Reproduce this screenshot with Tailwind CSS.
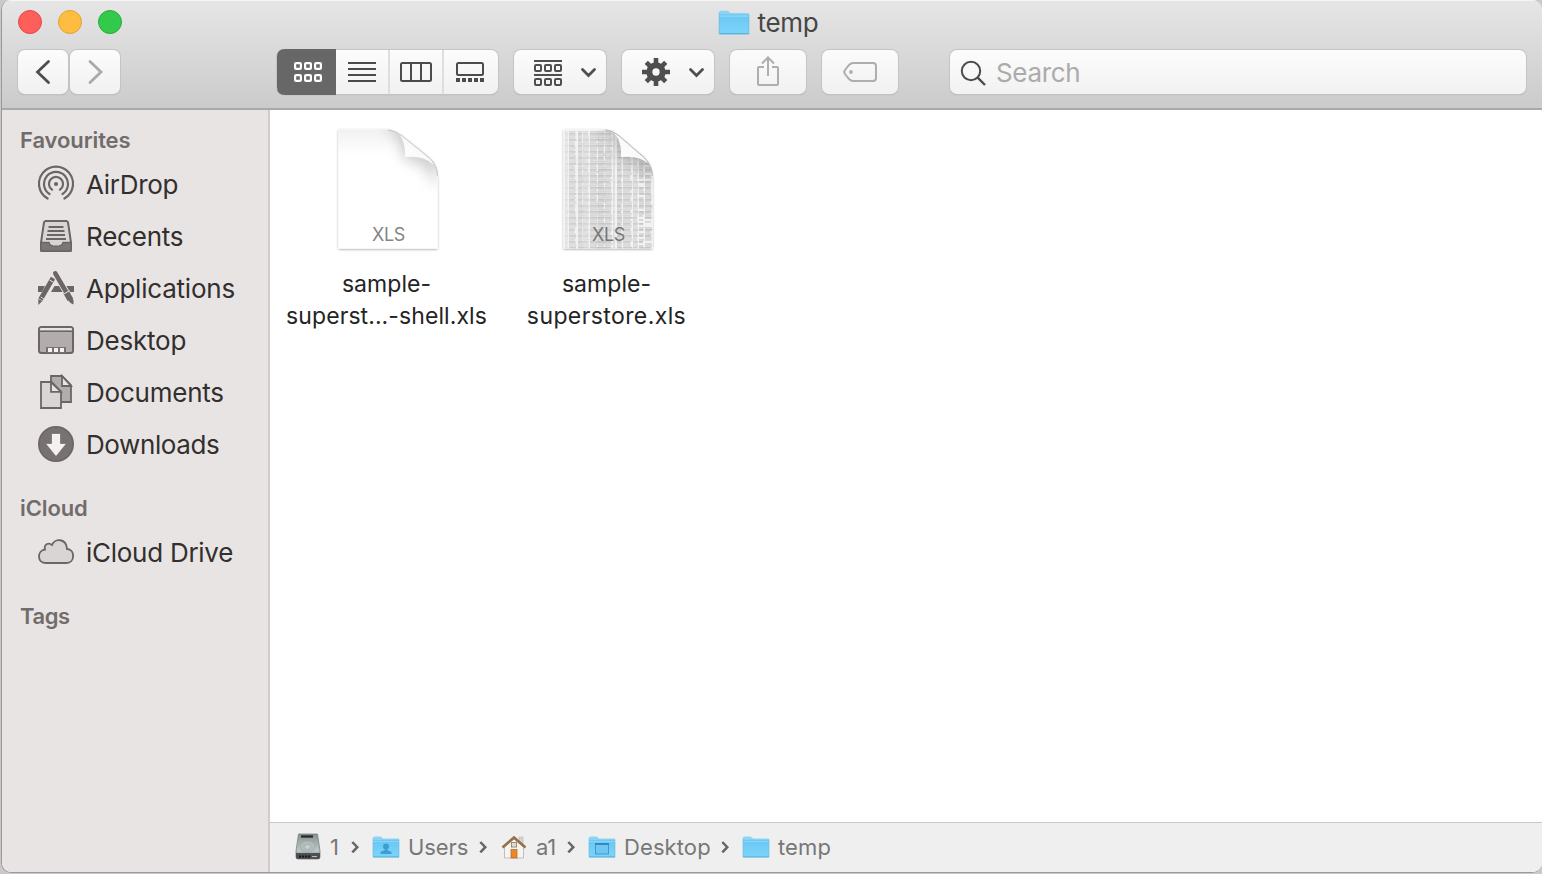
<!DOCTYPE html>
<html lang="en">
<head>
<meta charset="utf-8">
<title>temp</title>
<script src="https://cdn.jsdelivr.net/npm/@tailwindcss/browser@4"></script>
</head>
<body class="h-[874px] w-[1542px] overflow-hidden bg-[#c9c9c9] font-[Inter,'Liberation_Sans',sans-serif] antialiased">
<svg class="absolute h-0 w-0" aria-hidden="true">
  <defs>
    <linearGradient id="fold" x2="0" y2="1"><stop stop-color="#6ac8f4"/><stop offset="1" stop-color="#7dd4fa"/></linearGradient>
    <linearGradient id="disk" x2="0" y2="1"><stop stop-color="#87918f"/><stop offset=".65" stop-color="#bcc6c6"/><stop offset="1" stop-color="#858b8c"/></linearGradient>
    <linearGradient id="page" x2="0" y2="1"><stop stop-color="#f1f1f1"/><stop offset=".22" stop-color="#fff"/></linearGradient>
    <linearGradient id="curl" x1="0" y1="1" x2="1" y2="0"><stop stop-color="#fff"/><stop offset=".5" stop-color="#fafafa"/><stop offset="1" stop-color="#dcdcdc"/></linearGradient>
    <filter id="soft" x="-50%" y="-50%" width="200%" height="200%"><feGaussianBlur stdDeviation="7"/></filter>
    <filter id="drop" x="-10%" y="-10%" width="120%" height="120%"><feDropShadow dx="0" dy=".8" stdDeviation=".9" flood-opacity=".42"/></filter>
    <symbol id="folder" viewBox="0 0 28 24">
      <path d="M1 3.2Q1 1.5 2.5 1.5H8.5L11 3.5H26Q27 3.5 27 4.5V22H1Z" fill="#89d5f7"/>
      <path d="M1 6H27V22Q27 22.6 26 22.6H2Q1 22.6 1 22Z" fill="url(#fold)"/>
      <path d="M1 5.400H27" stroke="#57b3e0" stroke-width=".6"/><path d="M1 6.300H27" stroke="#a5e1fa" stroke-width=".7"/>
      <path d="M1 21.9H27" stroke="#5aaed5" stroke-width="1"/>
      <path d="M1 3.2V22M27 4.5V22" stroke="#68b9dd" stroke-width=".6"/>
    </symbol>
    <symbol id="chev" viewBox="0 0 8 12"><path d="M1.3 1L6.3 6.200L1.3 11.400" fill="none" stroke="#666" stroke-width="2.5"/></symbol>
  </defs>
</svg>

<div class="ml-[1px] flex h-[873px] w-[1541px] flex-col overflow-hidden rounded-[10px] border-b border-l border-[#979a9a] bg-white">
  <header class="flex h-[110px] shrink-0 flex-col border-b-2 border-[#a9a9a9] bg-linear-to-b from-[#e6e6e6] to-[#cbcbcb] shadow-[inset_0_1px_0_#f5f5f5]">
    <div class="grid h-[46px] grid-cols-3 items-center">
      <div class="-mt-[2px] flex gap-4 pl-4">
        <span class="h-6 w-6 rounded-full border border-[#e2474a] bg-[#fe5f5a]"></span>
        <span class="h-6 w-6 rounded-full border border-[#e2a038] bg-[#febc40]"></span>
        <span class="h-6 w-6 rounded-full border border-[#27ac38] bg-[#33ca4b]"></span>
      </div>
      <div class="flex items-center justify-center gap-[7px] pr-[7px]">
        <svg class="-mt-[2px] h-[27px] w-[32px]" viewBox="0 0 28 24" preserveAspectRatio="none"><use href="#folder" width="28" height="24"/></svg>
        <span class="text-[26px] leading-8 tracking-[-0.25px] text-[#464646]">temp</span>
      </div>
    </div>
    <div class="flex items-start pt-1 pl-[16px]">
      <button class="mr-[2px] h-[44px] w-[50px] rounded-[7px] bg-linear-to-b from-[#fcfcfc] to-[#f1f1f1] shadow-[0_0_0_1px_#c4c4c4,0_1px_1px_0_#999]"><svg class="h-[44px] w-[50px]" fill="none" stroke="#4e4e4e" stroke-width="2.8" stroke-linecap="round"><path d="M30.5 11.5L19.5 22L30.5 32.5"/></svg></button>
      <button class="h-[44px] w-[50px] rounded-[7px] bg-linear-to-b from-[#fcfcfc] to-[#f1f1f1] shadow-[0_0_0_1px_#c4c4c4,0_1px_1px_0_#999]"><svg class="h-[44px] w-[50px]" fill="none" stroke="#aaa" stroke-width="2.8" stroke-linecap="round"><path d="M20 11.5L31 22L20 32.5"/></svg></button>
      <div class="ml-[157px] flex h-[44px] w-[221px] overflow-visible rounded-[7px] bg-linear-to-b from-[#fcfcfc] to-[#f1f1f1] shadow-[0_0_0_1px_#c4c4c4,0_1px_1px_0_#999]">
        <svg class="-mt-px h-[46px] w-[221px] overflow-visible" viewBox="277 49 221 46" fill="none">
          <path d="M336 49V95H285Q277 95 277 87V57Q277 49 285 49Z" fill="#676767"/>
          <g stroke="#fff" stroke-width="2.2"><rect x="295.100" y="63.100" width="5.8" height="5.8" rx="1"/><rect x="305.100" y="63.100" width="5.8" height="5.8" rx="1"/><rect x="315.100" y="63.100" width="5.8" height="5.8" rx="1"/><rect x="295.100" y="75.100" width="5.8" height="5.8" rx="1"/><rect x="305.100" y="75.100" width="5.8" height="5.8" rx="1"/><rect x="315.100" y="75.100" width="5.8" height="5.8" rx="1"/></g>
          <path d="M389 50V94M443 50V94" stroke="#dedede" stroke-width="2"/>
          <g stroke="#4b4b4b" stroke-width="2"><path d="M348 63H376M348 69H376M348 75H376M348 81H376"/><rect x="401" y="63" width="30" height="18" rx="1.5"/><path d="M411 63V81M421 63V81"/><rect x="457" y="63" width="26" height="12" rx="1.5"/><path d="M456 80H484" stroke-width="4" stroke-dasharray="4 2"/></g>
        </svg>
      </div>
      <button class="ml-[16px] h-[44px] w-[92px] rounded-[7px] bg-linear-to-b from-[#fcfcfc] to-[#f1f1f1] shadow-[0_0_0_1px_#c4c4c4,0_1px_1px_0_#999]">
        <svg class="h-[44px] w-[92px]" viewBox="514 50 92 44" fill="none" stroke="#4f4f4f" stroke-width="2"><path d="M534 61H562M534 75H562"/><rect x="535" y="65" width="6" height="6" rx="1"/><rect x="545" y="65" width="6" height="6" rx="1"/><rect x="555" y="65" width="6" height="6" rx="1"/><rect x="535" y="79" width="6" height="6" rx="1"/><rect x="545" y="79" width="6" height="6" rx="1"/><rect x="555" y="79" width="6" height="6" rx="1"/><path d="M582.5 69.5L588.5 75.5L594.5 69.5" stroke-width="2.8" stroke-linecap="round"/></svg>
      </button>
      <button class="ml-[16px] h-[44px] w-[92px] rounded-[7px] bg-linear-to-b from-[#fcfcfc] to-[#f1f1f1] shadow-[0_0_0_1px_#c4c4c4,0_1px_1px_0_#999]">
        <svg class="h-[44px] w-[92px]" viewBox="622 50 92 44" fill="none" stroke="#4f4f4f"><circle cx="656" cy="72" r="6.7" stroke-width="6"/><g stroke-width="4.6"><path d="M656 58V64M656 80V86M642 72H648M664 72H670"/><path d="M646.3 62.3L650.3 66.3M661.7 77.7L665.7 81.7M665.7 62.3L661.7 66.3M650.3 77.7L646.3 81.7"/></g><path d="M690.5 69.5L696.5 75.5L702.5 69.5" stroke-width="2.8" stroke-linecap="round"/></svg>
      </button>
      <button class="ml-[16px] h-[44px] w-[76px] rounded-[7px] bg-linear-to-b from-[#fbfbfb] to-[#f1f1f1] shadow-[0_0_0_1px_#c4c4c4,0_1px_1px_0_#999]">
        <svg class="h-[44px] w-[76px]" viewBox="730 50 76 44" fill="none" stroke="#aeaeae" stroke-width="2"><path d="M764 67H759Q758 67 758 68V84Q758 85 759 85H777Q778 85 778 84V68Q778 67 777 67H772M768 76V58M762 63.5L768 57.5L774 63.5"/></svg>
      </button>
      <button class="ml-[16px] h-[44px] w-[76px] rounded-[7px] bg-linear-to-b from-[#fbfbfb] to-[#f1f1f1] shadow-[0_0_0_1px_#c4c4c4,0_1px_1px_0_#999]">
        <svg class="h-[44px] w-[76px]" viewBox="822 50 76 44" fill="none" stroke="#aeaeae" stroke-width="2"><path d="M853 63H873Q876 63 876 66V78Q876 81 873 81H853Q851 81 849 79L845 74Q843.5 72 845 70L849 65Q851 63 853 63Z"/><circle cx="851" cy="72" r="1.9" fill="#aeaeae" stroke="none"/></svg>
      </button>
      <div class="ml-[52px] flex h-[44px] w-[576px] items-center rounded-[7px] bg-linear-to-b from-[#fcfcfc] to-[#f2f2f2] shadow-[0_0_0_1px_#c4c4c4,0_1px_1px_0_#999]">
        <svg class="h-[44px] w-[46px]" viewBox="950 50 46 44" fill="none" stroke="#4b4b4b" stroke-width="2"><circle cx="971" cy="71" r="9.2"/><path d="M977.7 77.7L985 85" stroke-width="2.4"/></svg>
        <span class="pt-[2px] text-[26px] leading-8 tracking-[-0.35px] text-[#ababab]">Search</span>
      </div>
    </div>
  </header>

  <div class="flex min-h-0 flex-1">
    <aside class="w-[268px] shrink-0 border-r-2 border-[#cfcccb] bg-[#e8e4e3] pt-[13px] text-[26px] tracking-[-0.22px] text-[#322f2e]">
      <h2 class="mb-px pl-[18px] text-[22px] leading-[34px] font-semibold tracking-[-0.1px] text-[#716c6b]">Favourites</h2>
      <ul>
        <li class="flex h-[52px] items-center gap-3 pl-[36px]">
          <svg class="h-[38px] w-[36px]" viewBox="38 165 36 38" fill="none" stroke="#6b6665" stroke-width="2.2" stroke-linecap="round"><path d="M47.6 198.5A17 17 0 1 1 64.4 198.5M49.5 194A12 12 0 1 1 62.5 194M52 189.7A7 7 0 1 1 60 189.7"/><circle cx="56" cy="184" r="2.1" fill="#6b6665" stroke="none"/></svg>
          <span class="tracking-[-0.3px]">AirDrop</span></li>
        <li class="flex h-[52px] items-center gap-3 pl-[36px]">
          <svg class="h-[38px] w-[36px]" viewBox="38 217 36 38" fill="none" stroke="#6b6665" stroke-width="2"><path d="M45.5 221H66.5L68 222.3L71 242.5V249.5Q71 251 69.5 251H42.5Q41 251 41 249.5V242.5L44 222.3Z" fill="#d9d5d4"/><path d="M41 242.5H49C49.500 247.5 62.500 247.5 63 242.5H71V251H41Z" fill="#7b7675" stroke-width="1.4"/><path d="M48.5 227H63.5M47.5 231H64.5M47 235H65M46 239H66" stroke-width="1.8"/></svg>
          <span>Recents</span></li>
        <li class="flex h-[52px] items-center gap-3 pl-[36px]">
          <svg class="h-[38px] w-[36px]" viewBox="38 269 36 38" fill="none" stroke="#6b6665"><path d="M38 286H45L42 292H38ZM51 292L54.5 286H59L62.5 292ZM66.5 286H74V292H70Z" fill="#6b6665" stroke="none"/><path d="M55.3 273.3L68.5 296" stroke-width="4.6" stroke-linecap="round"/><path d="M66 292L70.2 299.5" stroke-width="6"/><path d="M68 298.5Q68 302 73.3 304.5Q74.2 301 72.3 297" fill="#6b6665" stroke="none"/><path d="M53 278L40.5 299.5" stroke-width="4.8"/><path d="M38.3 299L42.3 301L38.3 305Z" fill="#6b6665" stroke="none"/><path d="M49.5 280L53.3 282.2M63.8 294L69.7 290.7" stroke="#e8e4e3" stroke-width="1"/><path d="M40.7 297L44 299" stroke="#e8e4e3" stroke-width=".8"/></svg>
          <span>Applications</span></li>
        <li class="flex h-[52px] items-center gap-3 pl-[36px]">
          <svg class="h-[38px] w-[36px]" viewBox="38 321 36 38" fill="none" stroke="#6b6665" stroke-width="2"><rect x="39" y="327" width="34" height="26" rx="2.5" fill="#b2adac"/><path d="M40 330.5V329Q40 328 41.5 328H70.5Q72 328 72 329V330.5Z" fill="#e8e4e3" stroke="none"/><path d="M39 331.3H73" stroke-width="1.6"/><path d="M46 347H66V353H46Z" fill="#77716f" stroke="none"/><path d="M48 350H64" stroke="#f5f3f2" stroke-width="4" stroke-dasharray="4 2"/></svg>
          <span>Desktop</span></li>
        <li class="flex h-[52px] items-center gap-3 pl-[36px]">
          <svg class="h-[38px] w-[36px]" viewBox="38 373 36 38" stroke="#6b6665" stroke-width="1.8"><path d="M51 376H62L71 385V402H51Z" fill="#b2adac"/><path d="M62 376V386H71Z" fill="#e8e4e3"/><path d="M41 382H51.5L61 391.5V408H41Z" fill="#d9d5d4"/><path d="M51 382V391.8H61Z" fill="#e8e4e3"/></svg>
          <span>Documents</span></li>
        <li class="flex h-[52px] items-center gap-3 pl-[36px]">
          <svg class="h-[38px] w-[36px]" viewBox="38 425 36 38"><circle cx="56" cy="444" r="17.2" fill="#777271" stroke="#6b6665" stroke-width="1.6"/><path d="M51.5 433.500H60.5V443.500H66.500L56 456.500L45.500 443.500H51.5Z" fill="#f3f0ef" stroke="#65605f" stroke-width=".6"/></svg>
          <span class="tracking-[-0.4px]">Downloads</span></li>
      </ul>
      <h2 class="mt-[20px] pl-[18px] text-[22px] leading-[36px] font-semibold tracking-[-0.1px] text-[#716c6b]">iCloud</h2>
      <div class="flex h-[52px] items-center gap-3 pl-[36px]">
        <svg class="h-[38px] w-[36px]" viewBox="38 533 36 38"><path d="M46 563C36.700 563 37 550.500 45 549.500C43.500 544.500 48.500 542 52 545C55 537.500 66.500 538.500 67 549C75.500 549.500 75 563 66.500 563Z" fill="#d9d5d4" stroke="#6b6665" stroke-width="1.8"/></svg>
        <span class="tracking-[-0.27px]">iCloud Drive</span></div>
      <h2 class="mt-[20px] pl-[18px] text-[22px] leading-[36px] font-semibold tracking-[-0.4px] text-[#716c6b]">Tags</h2>
    </aside>

    <div class="flex min-w-0 flex-1 flex-col bg-white">
      <main class="flex flex-1 items-start pt-[10px] pl-[6px] text-center text-[23px] leading-8 text-[#242424]">
        <figure class="flex w-[220px] flex-col items-center">
          <svg class="ml-[3px] h-[140px] w-[120px]" viewBox="328 120 120 140">
            <clipPath id="c1"><path d="M338.500 129.500H385Q394 129.500 402 135.500L430 158Q437.500 166 437.500 178V248.500H338.500Z"/></clipPath>
            <path d="M338.500 129.500H385Q394 129.500 402 135.500L430 158Q437.500 166 437.500 178V248.500H338.500Z" fill="#fff" filter="url(#drop)"/>
            <g clip-path="url(#c1)"><rect x="338" y="129" width="100" height="120" fill="url(#page)"/><path d="M380 125Q403 130 403 160Q428 158 436 190L442 120Z" fill="#999" opacity=".5" filter="url(#soft)"/></g>
            <path d="M391 130Q406 134 405 157Q424 155 434 165L430 158L402 135Z" fill="url(#curl)"/>
            <path d="M388 129.800Q394 130 402 135.800L430 158.500Q437 165 437.400 176" fill="none" stroke="#bbb" stroke-width=".8"/>
            <text x="388.500" y="241" text-anchor="middle" font-size="18" letter-spacing="-.3" fill="#858585">XLS</text>
          </svg>
          <figcaption class="mt-[8px] ml-[1px] tracking-[0.08px]"><span class="tracking-[0.05px]">sample-</span><br>superst...-shell.xls</figcaption>
        </figure>
        <figure class="flex w-[220px] flex-col items-center">
          <svg class="ml-[3px] h-[140px] w-[120px]" viewBox="548 120 120 140">
            <clipPath id="c2"><path d="M563.500 129.500H603Q612 129.500 619 135.500L644 157Q652.500 165 652.500 178V248.500H563.500Z"/></clipPath>
            <path d="M563.500 129.500H603Q612 129.500 619 135.500L644 157Q652.500 165 652.500 178V248.500H563.500Z" fill="#fff" filter="url(#drop)"/>
            <g clip-path="url(#c2)"><rect x="563" y="129" width="90" height="120" fill="#f2f2f2"/><g id="cells"></g><path d="M597 125Q619 130 619 160Q644 158 653 188L660 120Z" fill="#888" opacity=".5" filter="url(#soft)"/></g>
            <path d="M607 130Q622 134 621 157Q639 155 649 164L644 157L619 135Z" fill="url(#curl)"/>
            <path d="M605 129.800Q612 130 619 135.800L644 157.500Q652 165 652.400 176" fill="none" stroke="#aaa" stroke-width=".8"/>
            <text x="608.500" y="241" text-anchor="middle" font-size="18" letter-spacing="-.3" fill="#777">XLS</text>
          </svg>
          <figcaption class="mt-[8px] ml-[1px] tracking-[0.4px]"><span class="tracking-[0.05px]">sample-</span><br>superstore.xls</figcaption>
        </figure>
      </main>
      <footer class="flex h-[50px] shrink-0 items-center border-t border-[#c8c8c8] bg-[#efefef] pb-px pl-[25px] text-[22px] text-[#777]">
        <svg class="h-[28px] w-[26px]" viewBox="295 833 26 28"><path d="M298.500 834H317.500L320 851V857Q320 859 318 859H298Q296 859 296 857V851Z" fill="url(#disk)" stroke="#6e7475" stroke-width=".7"/><path d="M296 853H320V857Q320 859 318 859H298Q296 859 296 857Z" fill="#4c5051"/><path d="M301 836.500H313" stroke="#2b2e2f" stroke-width="2.400"/><ellipse cx="307.500" cy="846.500" rx="7.500" ry="5.500" fill="#b2bcbc" stroke="#9da7a7" stroke-width=".7"/><ellipse cx="307.500" cy="847" rx="3.400" ry="2.500" fill="#c6cece" stroke="#959f9f" stroke-width=".6"/><path d="M299 856.500H311" stroke="#17191a" stroke-width="2" stroke-dasharray="2 1"/><path d="M312 856.500H317" stroke="#b9bfbf"/></svg>
        <span class="ml-[9px] w-[12px]">1</span>
        <svg class="ml-[9px] h-3 w-2"><use href="#chev"/></svg>
        <svg class="ml-[13px] h-6 w-7" viewBox="0 0 28 24"><use href="#folder"/><circle cx="14" cy="11.500" r="3" fill="#3b9fd1"/><path d="M12.800 13H15.200V15L19.500 17V19H8.500V17L12.800 15Z" fill="#3b9fd1"/></svg>
        <span class="ml-[8px] w-[62px] tracking-[-0.1px]">Users</span>
        <svg class="ml-[9px] h-3 w-2"><use href="#chev"/></svg>
        <svg class="ml-[14px] h-[26px] w-[26px]" viewBox="501 835 26 26"><path d="M519 838H523V846H519Z" fill="#d9d4cf" stroke="#aaa" stroke-width=".5"/><path d="M504.500 848L514 840L523.500 848V859H504.500Z" fill="#f6f4f2" stroke="#b5b1ad" stroke-width=".8"/><path d="M502.500 848.500L514 838.500L525.500 848.500" fill="none" stroke="#94714e" stroke-width="2.600"/><rect x="511.500" y="843.500" width="5" height="4.500" fill="#ddd" stroke="#a88866"/><rect x="511" y="850.500" width="6" height="8.500" fill="#ef8625" stroke="#a96b32" stroke-width=".7"/></svg>
        <span class="ml-[9px] w-[22px] tracking-[-0.2px]">a1</span>
        <svg class="ml-[9px] h-3 w-2"><use href="#chev"/></svg>
        <svg class="ml-[13px] h-6 w-7" viewBox="0 0 28 24"><use href="#folder"/><rect x="7.500" y="8.500" width="13" height="10.500" fill="#6fc7ef" stroke="#3c9bcf"/><path d="M7 9H21" stroke="#2f8cc2" stroke-width="2"/></svg>
        <span class="ml-[8px] w-[88px] tracking-[0.1px]">Desktop</span>
        <svg class="ml-[9px] h-3 w-2"><use href="#chev"/></svg>
        <svg class="ml-[13px] h-6 w-7" viewBox="0 0 28 24"><use href="#folder"/></svg>
        <span class="ml-[8px] tracking-[0.1px]">temp</span>
      </footer>
    </div>
  </div>
</div>
<script>
  // Miniature spreadsheet preview: columns of dense, faint text rows
  let s = 11;
  const r = () => (s = (s * 16807) % 2147483647) / 2147483647;
  const cols = [[565,3,.2],[569,7,.36],[578,5,.4],[583,6,.3],[590,8,.4],[598,7,.45],[605,7,.4],[613,2,.3],[617,5,.45],[623,9,.4],[633,5,.35],[639,5,.45],[645,7,.45]];
  let out = '';
  for (let y = 131; y < 249; y += 2)
    for (const [x, w, o] of cols) {
      if (x > 636 && r() < .22) continue;
      out += `<rect x="${x}" y="${y}" width="${(w * (.78 + r() * .3)).toFixed(1)}" height="1.8" fill="#9c9c9c" opacity="${(o * (y % 6 < 3 ? 1.15 : .7)).toFixed(2)}"/>`;
    }
  document.getElementById('cells').innerHTML = out;
</script>
</body>
</html>
